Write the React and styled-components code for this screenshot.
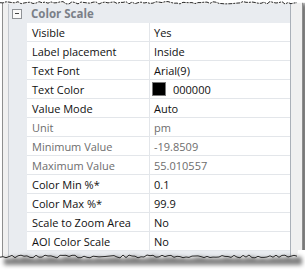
import React from "react";
import styled, { createGlobalStyle } from "styled-components";

const GlobalStyle = createGlobalStyle`
  html, body {
    margin: 0;
    padding: 0;
    background: #ffffff;
  }
  body {
    font-family: "Open Sans", "Liberation Sans", sans-serif;
  }
`;

const Page = styled.div`
  position: relative;
  width: 305px;
  height: 270px;
  overflow: hidden;
  background: #ffffff;
`;

const Window = styled.div`
  margin-left: 2px;
  width: 291px;
  height: 254px;
  padding: 4px 3px 0 5px;
  background: #f0f0f0;
  border-left: 1px solid #8e8e8e;
  border-right: 1px solid #8e8e8e;
  box-shadow: 5px 3px 5px rgba(0, 0, 0, 0.55);
  box-sizing: content-box;
`;

const Grid = styled.div`
  display: flex;
  flex-direction: column;
  width: 281px;
  height: 254px;
  background: #e9ecf0;
  border-left: 1px solid #c4c8ce;
  border-right: 1px solid #aab0b8;
`;

const CategoryRow = styled.div`
  display: flex;
  align-items: center;
  height: 19px;
  background: #e9ecf0;
`;

const Toggle = styled.span`
  position: relative;
  width: 8px;
  height: 8px;
  margin: 0 9px 0 3px;
  border: 1px solid #8f9296;
  background: #fafafa;

  &::after {
    content: "";
    position: absolute;
    left: 2px;
    right: 2px;
    top: 3.5px;
    height: 1px;
    background: #444;
  }
`;

const CategoryName = styled.span`
  font-size: 11.5px;
  font-weight: 700;
  color: #7b8088;
`;

const Row = styled.div`
  display: flex;
  height: 19px;
`;

const Gutter = styled.div`
  flex: 0 0 18px;
  background: #e9ecf0;
`;

const Cell = styled.div`
  display: flex;
  align-items: center;
  box-sizing: border-box;
  height: 19px;
  background: #ffffff;
  border-bottom: 1px solid #e3e6ea;
  font-size: 11px;
  color: ${({ $muted }) => ($muted ? "#6d6d6d" : "#101010")};
  white-space: nowrap;
`;

const NameCell = styled(Cell)`
  flex: 0 0 123px;
  padding-left: 5px;
  border-right: 1px solid #e3e6ea;
`;

const ValueCell = styled(Cell)`
  flex: 1;
  padding-left: 4px;
`;

const Swatch = styled.span`
  width: 12px;
  height: 12px;
  margin: 0 7px 0 -2px;
  background: #000000;
  border: 1px solid #7a7a7a;
`;

const Tear = styled.svg`
  position: absolute;
  left: 0;
  display: block;
`;

const rows = [
  ["Visible", "Yes"],
  ["Label placement", "Inside"],
  ["Text Font", "Arial(9)"],
  ["Text Color", "000000", false, true],
  ["Value Mode", "Auto"],
  ["Unit", "pm", true],
  ["Minimum Value", "-19.8509", true],
  ["Maximum Value", "55.010557", true],
  ["Color Min %*", "0.1"],
  ["Color Max %*", "99.9"],
  ["Scale to Zoom Area", "No"],
  ["AOI Color Scale", "No"],
];

// rough jagged line for the torn paper edges
function jagged(seed, from, to, base, amp) {
  let s = seed;
  const pts = [];
  for (let x = from; x <= to; x += 3) {
    s = (s * 9301 + 49297) % 233280;
    pts.push([x, base + (s / 233280) * amp]);
  }
  return pts;
}

const topPts = jagged(7, 0, 297, 1.5, 2.5);
const bottomPts = jagged(13, 0, 297, 255, 3);
const line = (pts) => pts.map(([x, y]) => `${x},${y.toFixed(1)}`).join(" ");

export default function App() {
  return (
    <Page>
      <GlobalStyle />
      <Window>
        <Grid>
          <CategoryRow>
            <Toggle />
            <CategoryName>Color Scale</CategoryName>
          </CategoryRow>
          {rows.map(([name, value, muted, swatch]) => (
            <Row key={name}>
              <Gutter />
              <NameCell $muted={muted}>{name}</NameCell>
              <ValueCell $muted={muted}>
                {swatch && <Swatch />}
                {value}
              </ValueCell>
            </Row>
          ))}
        </Grid>
      </Window>
      <Tear width="305" height="6" style={{ top: 0 }}>
        <polygon points={`0,0 305,0 305,${topPts[topPts.length - 1][1]} ${line([...topPts].reverse())}`} fill="#ffffff" />
        <polyline points={line(topPts)} fill="none" stroke="#2a2a2a" strokeWidth="1" strokeDasharray="4 1 2 1" />
      </Tear>
      <Tear width="305" height="270" style={{ top: 0, pointerEvents: "none" }}>
        <defs>
          <filter id="blur" x="-10%" y="-50%" width="120%" height="200%">
            <feGaussianBlur stdDeviation="2.2" />
          </filter>
        </defs>
        <polygon points={`0,270 305,270 305,250 298,250 ${line([...bottomPts].reverse())}`} fill="#ffffff" />
        <polygon
          points={`${line(bottomPts.map(([x, y]) => [x + 4, y + 1]))} 302,${bottomPts[bottomPts.length - 1][1] + 1} 302,265 4,265`}
          fill="#000000"
          opacity="0.5"
          filter="url(#blur)"
        />
        <polyline points={line(bottomPts)} fill="none" stroke="#2a2a2a" strokeWidth="1" />
      </Tear>
    </Page>
  );
}
